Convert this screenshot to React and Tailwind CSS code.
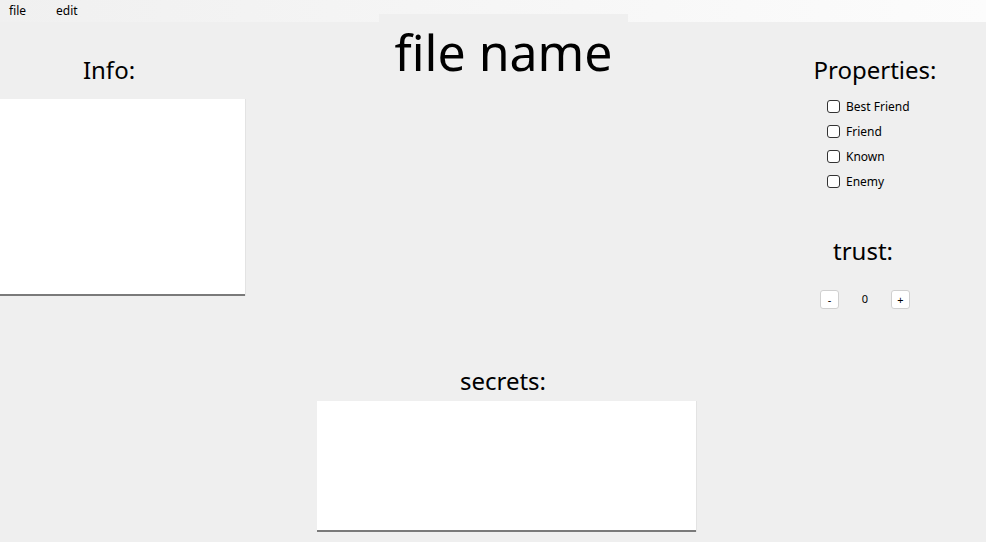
import { useState } from "react";

const props = ["Best Friend", "Friend", "Known", "Enemy"];

function Check({ label }) {
  const [on, setOn] = useState(false);
  return (
    <label className="flex items-center h-[25px] gap-[6px] cursor-pointer" onClick={() => setOn(!on)}>
      <span className={"w-[13px] h-[13px] rounded-[3px] border border-[#333] " + (on ? "bg-[#0067c0]" : "bg-white")}></span>
      <span className="text-[12px] text-black">{label}</span>
    </label>
  );
}

function App() {
  const [trust, setTrust] = useState(0);

  return (
    <div className="w-[986px] h-[542px] bg-[#efefef] overflow-hidden text-black" style={{ fontFamily: '"Noto Sans", "Open Sans", sans-serif' }}>
      <div className="h-[22px] flex items-center text-[12px] bg-gradient-to-r from-[#f0f0f0] to-[#fcfcfc]">
        <span className="pl-[9px] w-[56px]">file</span>
        <span>edit</span>
      </div>

      <div className="flex items-start h-[343px]">
        <div className="w-[245px] pt-[32px]">
          <h2 className="w-[218px] text-center text-[24px] leading-[32px]">Info:</h2>
          <div className="mt-[13px] h-[197px] bg-white border-b-2 border-[#7a7a7a] shadow-[1px_0_0_#e3e3e3]"></div>
        </div>

        <div className="ml-[134px] w-[249px] -mt-[8px] bg-[#efefef] text-center">
          <h1 className="text-[50px] leading-[76px]">file name</h1>
        </div>

        <div className="ml-auto w-[186px] pt-[32px]">
          <h2 className="w-[150px] text-center text-[24px] leading-[32px]">Properties:</h2>
          <div className="mt-[8px] pl-[27px]">
            {props.map((p) => (
              <Check key={p} label={p} />
            ))}
          </div>
          <h2 className="mt-[41px] w-[126px] text-center text-[24px] leading-[32px]">trust:</h2>
          <div className="mt-[23px] flex items-center pl-[20px] text-[11px]">
            <button onClick={() => setTrust(trust - 1)} className="w-[19px] h-[19px] bg-white border border-[#d0d0d0] rounded-[3px] leading-none">-</button>
            <span className="w-[52px] text-center">{trust}</span>
            <button onClick={() => setTrust(trust + 1)} className="w-[19px] h-[19px] bg-white border border-[#d0d0d0] rounded-[3px] leading-none">+</button>
          </div>
        </div>
      </div>

      <div className="ml-[317px] w-[379px]">
        <h2 className="text-center text-[24px] leading-[32px] ml-[-7px]">secrets:</h2>
        <div className="mt-[4px] h-[131px] bg-white border-b-2 border-[#7a7a7a] shadow-[1px_0_0_#e3e3e3]"></div>
      </div>
    </div>
  );
}

export default App;
